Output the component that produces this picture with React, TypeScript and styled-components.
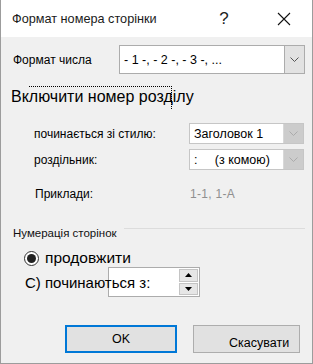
import React from "react";
import styled, { createGlobalStyle } from "styled-components";

const GlobalStyle = createGlobalStyle`
	body {
		margin: 0;
		font-family: "Liberation Sans", Arial, sans-serif;
		color: #000;
	}
`;

const Window = styled.div`
	position: relative;
	width: 313px;
	height: 364px;
	box-sizing: border-box;
	border: 1px solid #9c9c9c;
	border-top: none;
	background: #f0f0f0;
	display: flex;
	flex-direction: column;
	overflow: hidden;
`;

const TitleBar = styled.div`
	height: 37px;
	flex: 0 0 37px;
	background: #fff;
	display: flex;
	align-items: center;
	padding-left: 11px;
	font-size: 12.7px;
	color: #1a1a1a;
`;

const TitleText = styled.div`
	flex: 1;
`;

const HelpMark = styled.div`
	width: 14px;
	font-size: 17px;
	margin-right: 46px;
	text-align: center;
	color: #222;
`;

const CloseBox = styled.div`
	width: 14px;
	height: 14px;
	margin-right: 21px;
	display: flex;
`;

const Row = styled.div<{ top: number; left: number; height: number }>`
	display: flex;
	align-items: center;
	margin-top: ${(p) => p.top}px;
	padding-left: ${(p) => p.left}px;
	height: ${(p) => p.height}px;
	flex: 0 0 ${(p) => p.height}px;
	position: relative;
`;

const Label = styled.div<{ width: number; size?: number }>`
	width: ${(p) => p.width}px;
	flex: 0 0 ${(p) => p.width}px;
	font-size: ${(p) => p.size || 12}px;
	white-space: nowrap;
`;

const SelectBox = styled.div<{ width: number; disabled?: boolean }>`
	width: ${(p) => p.width}px;
	height: 100%;
	box-sizing: border-box;
	border: 1px solid ${(p) => (p.disabled ? "#c6c6c6" : "#acacac")};
	background: #fff;
	display: flex;
	align-items: stretch;
`;

const SelectValue = styled.div`
	flex: 1;
	display: flex;
	align-items: center;
	padding-left: 4px;
	font-size: 12.5px;
	white-space: pre;
`;

const SelectButton = styled.div<{ disabled?: boolean }>`
	width: 20px;
	box-sizing: border-box;
	border-left: 1px solid ${(p) => (p.disabled ? "#d8d8d8" : "#acacac")};
	background: ${(p) => (p.disabled ? "#cccccc" : "#e2e2e2")};
	display: flex;
	align-items: center;
	justify-content: center;
`;

const Heading = styled.div`
	position: relative;
	margin-top: 13px;
	padding-left: 10px;
	height: 20px;
	flex: 0 0 20px;
	display: flex;
	align-items: center;
	font-size: 16px;
`;

const FocusRect = styled.div`
	position: absolute;
	left: 28px;
	top: -1px;
	width: 142px;
	height: 22px;
	border-top: 1px dotted #000;
	border-right: 1px dotted #000;
`;

const Example = styled.div`
	font-size: 12px;
	color: #8f8f8f;
	letter-spacing: 0.3px;
`;

const GroupHeader = styled.div`
	position: relative;
	margin-top: 23px;
	padding-left: 12px;
	height: 12px;
	flex: 0 0 12px;
	font-size: 11.5px;
	display: flex;
	align-items: center;
	color: #111;
`;

const GroupLine = styled.div`
	position: absolute;
	left: 123px;
	right: 7px;
	top: 1px;
	border-top: 1px solid #dcdcdc;
`;

const Radio = styled.div`
	width: 15px;
	height: 15px;
	box-sizing: border-box;
	border: 1px solid #333;
	border-radius: 50%;
	background: #fff;
	display: flex;
	align-items: center;
	justify-content: center;
	margin-right: 6px;
	&::after {
		content: "";
		width: 9px;
		height: 9px;
		border-radius: 50%;
		background: #222;
	}
`;

const BigText = styled.div<{ size: number }>`
	font-size: ${(p) => p.size}px;
	white-space: nowrap;
	position: relative;
	z-index: 1;
`;

const SpinBox = styled.div`
	margin-left: -42px;
	width: 92px;
	height: 30px;
	box-sizing: border-box;
	border: 1px solid #acacac;
	background: #fff;
	display: flex;
	justify-content: flex-end;
	padding: 1px;
`;

const SpinButtons = styled.div`
	width: 19px;
	display: flex;
	flex-direction: column;
	gap: 1px;
`;

const SpinButton = styled.div`
	flex: 1;
	box-sizing: border-box;
	border: 1px solid #c4c4c4;
	background: #e6e6e6;
	display: flex;
	align-items: center;
	justify-content: center;
`;

const ButtonRow = styled.div`
	margin-top: auto;
	margin-bottom: 10px;
	display: flex;
	padding-left: 64px;
	gap: 16px;
`;

const Button = styled.div<{ primary?: boolean }>`
	width: ${(p) => (p.primary ? 112 : 107)}px;
	height: 28px;
	box-sizing: border-box;
	border: ${(p) => (p.primary ? "2px solid #0078d7" : "1px solid #adadad")};
	background: #e1e1e1;
	font-size: 12.5px;
	display: flex;
	align-items: center;
	justify-content: ${(p) => (p.primary ? "center" : "flex-start")};
	padding-left: ${(p) => (p.primary ? 0 : 35)}px;
	padding-top: ${(p) => (p.primary ? 0 : 7)}px;
`;

const Chevron = ({ color }: { color: string }) => (
	<svg width="9" height="5" viewBox="0 0 9 5">
		<polyline points="0.5,0.5 4.5,4.5 8.5,0.5" fill="none" stroke={color} strokeWidth="1" />
	</svg>
);

const Arrow = ({ up }: { up?: boolean }) => (
	<svg width="7" height="4" viewBox="0 0 7 4">
		<polygon points={up ? "0,4 7,4 3.5,0" : "0,0 7,0 3.5,4"} fill="#000" />
	</svg>
);

export default function App() {
	return (
		<>
			<GlobalStyle />
			<Window>
				<TitleBar>
					<TitleText>Формат номера сторінки</TitleText>
					<HelpMark>?</HelpMark>
					<CloseBox>
						<svg width="14" height="14" viewBox="0 0 14 14">
							<path d="M1 1 L13 13 M13 1 L1 13" stroke="#111" strokeWidth="1.1" />
						</svg>
					</CloseBox>
				</TitleBar>

				<Row top={8} left={12} height={29}>
					<Label width={106} size={12}>
						Формат числа
					</Label>
					<SelectBox width={186}>
						<SelectValue>- 1 -, - 2 -, - 3 -, ...</SelectValue>
						<SelectButton>
							<Chevron color="#555" />
						</SelectButton>
					</SelectBox>
				</Row>

				<Heading>
					<FocusRect />
					Включити номер розділу
				</Heading>

				<Row top={16} left={33} height={21}>
					<Label width={155} size={12}>
						починається зі стилю:
					</Label>
					<SelectBox width={115} disabled>
						<SelectValue>Заголовок 1</SelectValue>
						<SelectButton disabled>
							<Chevron color="#ababab" />
						</SelectButton>
					</SelectBox>
				</Row>

				<Row top={5} left={33} height={21}>
					<Label width={155} size={12}>
						роздільник:
					</Label>
					<SelectBox width={115} disabled>
						<SelectValue>{":     (з комою)"}</SelectValue>
						<SelectButton disabled>
							<Chevron color="#ababab" />
						</SelectButton>
					</SelectBox>
				</Row>

				<Row top={13} left={34} height={21}>
					<Label width={155} size={12}>
						Приклади:
					</Label>
					<Example>1-1, 1-A</Example>
				</Row>

				<GroupHeader>
					<GroupLine />
					Нумерація сторінок
				</GroupHeader>

				<Row top={10} left={23} height={18}>
					<Radio />
					<BigText size={15.5}>продовжити</BigText>
				</Row>

				<Row top={0} left={24} height={30}>
					<BigText size={15}>С) починаються з:</BigText>
					<SpinBox>
						<SpinButtons>
							<SpinButton>
								<Arrow up />
							</SpinButton>
							<SpinButton>
								<Arrow />
							</SpinButton>
						</SpinButtons>
					</SpinBox>
				</Row>

				<ButtonRow>
					<Button primary>OK</Button>
					<Button>Скасувати</Button>
				</ButtonRow>
			</Window>
		</>
	);
}
